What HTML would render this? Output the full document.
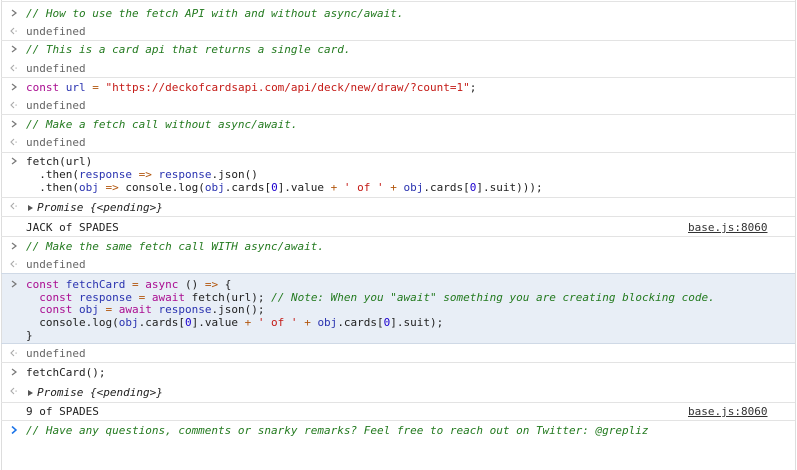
<!DOCTYPE html>
<html><head><meta charset="utf-8"><style>
body{margin:0;width:797px;height:470px;background:#fff;position:relative;overflow:hidden;font-family:"DejaVu Sans Mono","Liberation Mono",monospace;font-size:11px;color:#222}
.l{position:absolute;left:26px;white-space:pre;line-height:13px;height:13px}
.p{position:absolute;left:9px;width:10px;height:10px}
.s{position:absolute;left:1px;right:2px;height:1px;background:#e3e3e3}
.c{color:#237a1f;font-style:italic}
.k{color:#aa0d91}
.v{color:#2a33b0}
.o{color:#b2560d}
.r{color:#c41a16}
.n{color:#1c00cf}
.u{color:#666}
.i{font-style:italic}
.src{position:absolute;left:688px;text-decoration:underline;color:#333;line-height:13px}
.tri{display:inline-block;width:0;height:0;border-left:5px solid #555;border-top:3.5px solid transparent;border-bottom:3.5px solid transparent;margin-left:2px;margin-right:4px;vertical-align:0}
</style></head><body>
<svg width="0" height="0" style="position:absolute"><defs>
<symbol id="gt" viewBox="0 0 10 10"><polyline points="3,2 7,5 3,8" fill="none" stroke="#777" stroke-width="1.2"/></symbol>
<symbol id="gb" viewBox="0 0 10 10"><polyline points="5,2 2,5 5,8" fill="none" stroke="#aaa" stroke-width="1.1"/><rect x="6.5" y="4.5" width="1.2" height="1.2" fill="#aaa"/></symbol>
<symbol id="gbl" viewBox="0 0 10 10"><polyline points="3,1.5 7,5 3,8.5" fill="none" stroke="#1a73e8" stroke-width="1.5"/></symbol>
</defs></svg>
<div style="position:absolute;left:1px;top:0;width:1px;height:470px;background:#ddd"></div>
<div style="position:absolute;left:795px;top:0;width:1px;height:470px;background:#ddd"></div>
<div style="position:absolute;left:2px;right:2px;top:273px;height:70px;background:#e8eef6"></div>
<div class="s" style="top:1px"></div>
<div class="s" style="top:40px"></div>
<div class="s" style="top:77px"></div>
<div class="s" style="top:114px"></div>
<div class="s" style="top:152px"></div>
<div class="s" style="top:197px"></div>
<div class="s" style="top:216px"></div>
<div class="s" style="top:236px"></div>
<div class="s" style="top:273px;background:#cfd9e6"></div>
<div class="s" style="top:343px;background:#cfd9e6"></div>
<div class="s" style="top:362px"></div>
<div class="s" style="top:402px"></div>
<div class="s" style="top:420px"></div>

<svg class="p" style="top:8px"><use href="#gt"/></svg><div class="l c" style="top:7px">// How to use the fetch API with and without async/await.</div>
<svg class="p" style="top:26px"><use href="#gb"/></svg><div class="l u" style="top:25px">undefined</div>
<svg class="p" style="top:44px"><use href="#gt"/></svg><div class="l c" style="top:43px">// This is a card api that returns a single card.</div>
<svg class="p" style="top:63px"><use href="#gb"/></svg><div class="l u" style="top:62px">undefined</div>
<svg class="p" style="top:82px"><use href="#gt"/></svg><div class="l" style="top:81px"><span class="k">const</span> <span class="v">url</span> <span class="o">=</span> <span class="r">"https://deckofcardsapi.com/api/deck/new/draw/?count=1"</span>;</div>
<svg class="p" style="top:100px"><use href="#gb"/></svg><div class="l u" style="top:99px">undefined</div>
<svg class="p" style="top:119px"><use href="#gt"/></svg><div class="l c" style="top:118px">// Make a fetch call without async/await.</div>
<svg class="p" style="top:137px"><use href="#gb"/></svg><div class="l u" style="top:136px">undefined</div>
<svg class="p" style="top:156px"><use href="#gt"/></svg>
<div class="l" style="top:155px">fetch(url)</div>
<div class="l" style="top:168px">  .then(<span class="v">response</span> <span class="o">=&gt;</span> <span class="v">response</span>.json()</div>
<div class="l" style="top:181px">  .then(<span class="v">obj</span> <span class="o">=&gt;</span> console.log(<span class="v">obj</span>.cards[<span class="n">0</span>].value <span class="o">+</span> <span class="r">' of '</span> <span class="o">+</span> <span class="v">obj</span>.cards[<span class="n">0</span>].suit)));</div>
<svg class="p" style="top:201px"><use href="#gb"/></svg><div class="l i" style="top:201px"><span class="tri"></span>Promise {&lt;pending&gt;}</div>
<div class="l" style="top:221px">JACK of SPADES</div><div class="src" style="top:221px">base.js:8060</div>
<svg class="p" style="top:241px"><use href="#gt"/></svg><div class="l c" style="top:240px">// Make the same fetch call WITH async/await.</div>
<svg class="p" style="top:259px"><use href="#gb"/></svg><div class="l u" style="top:258px">undefined</div>
<svg class="p" style="top:279px"><use href="#gt"/></svg>
<div class="l" style="top:278px"><span class="k">const</span> <span class="v">fetchCard</span> <span class="o">=</span> <span class="k">async</span> () <span class="o">=&gt;</span> {</div>
<div class="l" style="top:291px">  <span class="k">const</span> <span class="v">response</span> <span class="o">=</span> <span class="k">await</span> fetch(url); <span class="c">// Note: When you "await" something you are creating blocking code.</span></div>
<div class="l" style="top:303px">  <span class="k">const</span> <span class="v">obj</span> <span class="o">=</span> <span class="k">await</span> <span class="v">response</span>.json();</div>
<div class="l" style="top:316px">  console.log(<span class="v">obj</span>.cards[<span class="n">0</span>].value <span class="o">+</span> <span class="r">' of '</span> <span class="o">+</span> <span class="v">obj</span>.cards[<span class="n">0</span>].suit);</div>
<div class="l" style="top:329px">}</div>
<svg class="p" style="top:348px"><use href="#gb"/></svg><div class="l u" style="top:347px">undefined</div>
<svg class="p" style="top:367px"><use href="#gt"/></svg><div class="l" style="top:366px">fetchCard();</div>
<svg class="p" style="top:386px"><use href="#gb"/></svg><div class="l i" style="top:386px"><span class="tri"></span>Promise {&lt;pending&gt;}</div>
<div class="l" style="top:405px">9 of SPADES</div><div class="src" style="top:405px">base.js:8060</div>
<svg class="p" style="top:425px"><use href="#gbl"/></svg><div class="l c" style="top:424px">// Have any questions, comments or snarky remarks? Feel free to reach out on Twitter: @grepliz</div>
</body></html>
